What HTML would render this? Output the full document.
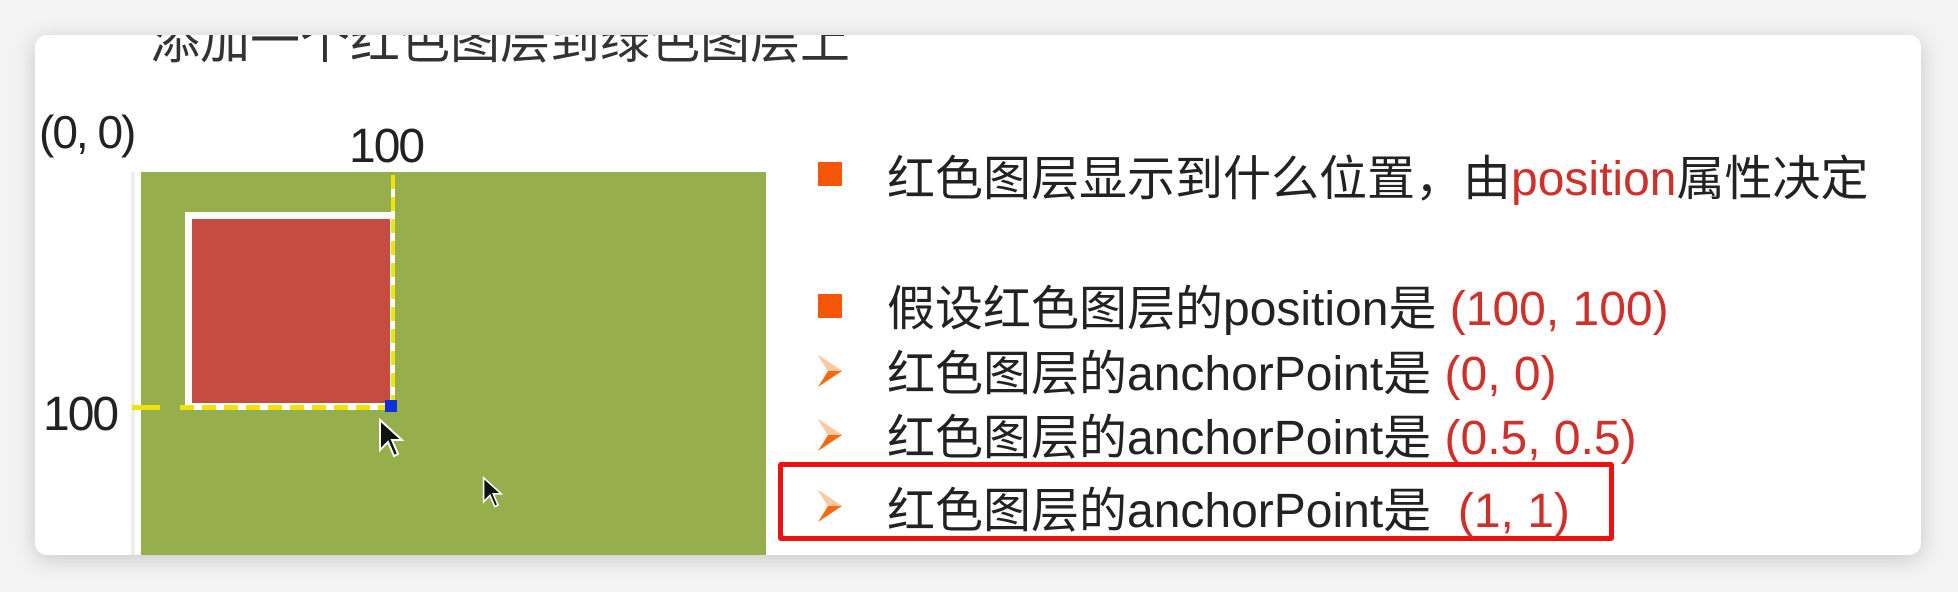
<!DOCTYPE html>
<html><head><meta charset="utf-8"><style>
html,body{margin:0;padding:0;width:1958px;height:592px;overflow:hidden;background:#f3f3f3;}
.card{position:absolute;left:35px;top:35px;width:1886px;height:520px;background:#fff;border-radius:12px;box-shadow:0 4px 22px rgba(0,0,0,0.18);overflow:hidden;}
.t{position:absolute;font-family:"Liberation Sans","Noto Sans CJK SC",sans-serif;color:#222;white-space:nowrap;}
.r{color:#d0302a;}
.sq{position:absolute;width:24px;height:24px;background:#f5560a;}
.ar{position:absolute;}
</style></head><body>
<div class="card">
  <div class="t" style="left:115px;top:-34px;font-size:50px;color:#333;">添加一个红色图层到绿色图层上</div>
  <div class="t" style="left:4px;top:70px;font-size:46px;letter-spacing:-2px;">(0, 0)</div>
  <div class="t" style="left:314px;top:84px;font-size:48px;letter-spacing:-2px;">100</div>
  <div class="t" style="left:8px;top:352px;font-size:48px;letter-spacing:-2px;">100</div>
  <div style="position:absolute;left:96px;top:137px;width:4px;height:400px;background:#eee;"></div>
  <div style="position:absolute;left:106px;top:137px;width:625px;height:400px;background:#97ae4c;"></div>
  <div style="position:absolute;left:150px;top:177px;width:208px;height:196px;background:#fff;"></div>
  <div style="position:absolute;left:157px;top:184px;width:198px;height:184px;background:#c44c40;"></div>
  <div style="position:absolute;left:356px;top:140px;width:4px;height:232px;background:repeating-linear-gradient(#f1e20a 0 14px,#fff 14px 22px);"></div>
  <div style="position:absolute;left:145px;top:370px;width:212px;height:5px;background:repeating-linear-gradient(90deg,#f1e20a 0 14px,#fff 14px 22px);"></div>
  <div style="position:absolute;left:97px;top:370px;width:28px;height:5px;background:#f1e20a;"></div>
  <div style="position:absolute;left:350px;top:365px;width:12px;height:12px;background:#1030e0;"></div>
  <svg class="ar" style="left:343px;top:383px" width="30" height="42" viewBox="0 0 15 21"><path d="M1 1 L1 16 L5 12 L8 19 L10 18 L7 11 L12 11 Z" fill="#111" stroke="#fff" stroke-width="1"/></svg>
  <svg class="ar" style="left:447px;top:440px" width="24" height="36" viewBox="0 0 15 21"><path d="M1 1 L1 16 L5 12 L8 19 L10 18 L7 11 L12 11 Z" fill="#111" stroke="#fff" stroke-width="1"/></svg>

  <div class="sq" style="left:783px;top:127px;"></div>
  <div class="t" style="left:852px;top:104px;font-size:48px;">红色图层显示到什么位置，由<span class="r">position</span>属性决定</div>
  <div class="sq" style="left:783px;top:259px;"></div>
  <div class="t" style="left:852px;top:234px;font-size:48px;">假设红色图层的position是 <span class="r">(100, 100)</span></div>
  <svg class="ar" style="left:781px;top:318px" width="28" height="36" viewBox="0 0 14 18"><path d="M1 1 L13 9 L1 17 L6 9 Z" fill="#f36a10"/><path d="M1 1 L13 9 L6 9 Z" fill="#fbc9a0"/></svg>
  <div class="t" style="left:852px;top:299px;font-size:48px;">红色图层的anchorPoint是 <span class="r">(0, 0)</span></div>
  <svg class="ar" style="left:781px;top:382px" width="28" height="36" viewBox="0 0 14 18"><path d="M1 1 L13 9 L1 17 L6 9 Z" fill="#f36a10"/><path d="M1 1 L13 9 L6 9 Z" fill="#fbc9a0"/></svg>
  <div class="t" style="left:852px;top:363px;font-size:48px;">红色图层的anchorPoint是 <span class="r">(0.5, 0.5)</span></div>
  <div style="position:absolute;left:743px;top:427px;width:826px;height:69px;border:5px solid #f01010;border-radius:3px;"></div>
  <svg class="ar" style="left:781px;top:453px" width="28" height="36" viewBox="0 0 14 18"><path d="M1 1 L13 9 L1 17 L6 9 Z" fill="#f36a10"/><path d="M1 1 L13 9 L6 9 Z" fill="#fbc9a0"/></svg>
  <div class="t" style="left:852px;top:436px;font-size:48px;">红色图层的anchorPoint是 &nbsp;<span class="r">(1, 1)</span></div>
</div>
</body></html>
